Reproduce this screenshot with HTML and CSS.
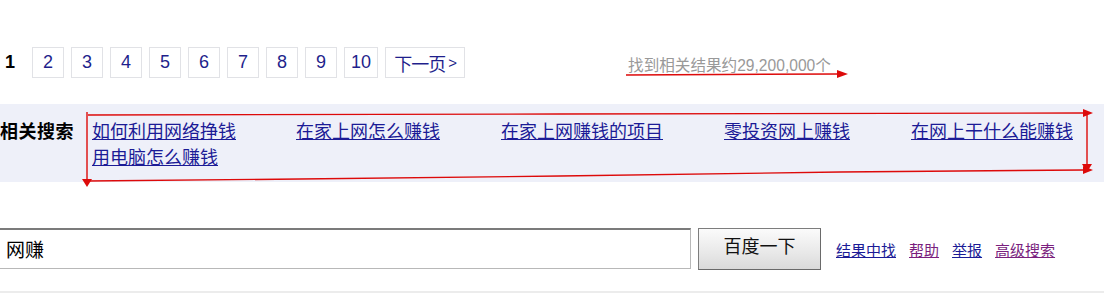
FILE: index.html
```html
<!DOCTYPE html>
<html lang="zh-CN">
<head>
<meta charset="utf-8">
<title>网赚 - 搜索结果</title>
<link rel="stylesheet" href="styles.css">
</head>
<body>
<div class="page">
  <div class="pager">
    <strong class="cur">1</strong>
    <a class="pg" href="#">2</a>
    <a class="pg" href="#">3</a>
    <a class="pg" href="#">4</a>
    <a class="pg" href="#">5</a>
    <a class="pg" href="#">6</a>
    <a class="pg" href="#">7</a>
    <a class="pg" href="#">8</a>
    <a class="pg" href="#">9</a>
    <a class="pg" href="#">10</a>
    <a class="pg next" href="#">下一页<span class="chev">&gt;</span></a>
    <span class="stats">找到相关结果约29,200,000个</span>
  </div>

  <div class="related">
    <div class="rel-label">相关搜索</div>
    <div class="rel-grid">
      <a href="#">如何利用网络挣钱</a>
      <a href="#">在家上网怎么赚钱</a>
      <a href="#">在家上网赚钱的项目</a>
      <a href="#">零投资网上赚钱</a>
      <a href="#">在网上干什么能赚钱</a>
      <a href="#">用电脑怎么赚钱</a>
    </div>
  </div>

  <form class="search">
    <div class="input">网赚</div>
    <button class="btn" type="button">百度一下</button>
    <div class="tools">
      <a href="#">结果中找</a>
      <a class="visited" href="#">帮助</a>
      <a href="#">举报</a>
      <a class="visited" href="#">高级搜索</a>
    </div>
  </form>

  <div class="footline"></div>

  <svg class="marks" width="1104" height="293" viewBox="0 0 1104 293">
    <g stroke="#dd0a0a" stroke-width="1.4" fill="none">
      <path d="M626 75 L720 74.5 L838 74"/>
      <path d="M88 115 L560 114 L1084 113"/>
      <path d="M87 112 L87 180"/>
      <path d="M1087 114 L1087 166"/>
      <path d="M88 181 L300 179 L560 176 L840 172 L1083 170"/>
    </g>
    <g fill="#dd0a0a">
      <polygon points="837,70 848,74 837,78"/>
      <polygon points="1083,109 1093,113 1083,117"/>
      <polygon points="82,179 92,179 87,187"/>
      <polygon points="1082,164 1092,164 1087,172"/>
      <polygon points="1083,166 1093,170 1083,174"/>
    </g>
  </svg>
</div>
</body>
</html>
```

FILE: styles.css
```css
html, body {
  margin: 0;
  padding: 0;
  background: #fff;
}

body {
  font-family: "Liberation Sans", Arial, "Noto Sans CJK SC", sans-serif;
  width: 1104px;
  height: 293px;
  overflow: hidden;
}

.page {
  position: relative;
  width: 1104px;
  height: 293px;
}

a {
  color: #1b1b96;
}

.pager {
  display: flex;
  align-items: center;
  gap: 7px;
  padding-top: 47px;
  height: 31px;
}

.cur {
  font-size: 18px;
  font-weight: bold;
  color: #000;
  padding-left: 5px;
  width: 8px;
  margin-right: 12px;
}

.pg {
  box-sizing: border-box;
  height: 31px;
  min-width: 32px;
  padding: 0 6px;
  border: 1px solid #e1e2e6;
  display: flex;
  align-items: center;
  justify-content: center;
  font-size: 18px;
  color: #1f1f8c;
  text-decoration: none;
  font-family: "Liberation Sans", Arial, "Noto Sans CJK SC", sans-serif;
}

.next {
  width: 80px;
  letter-spacing: -1px;
}

.chev {
  font-size: 15px;
  margin-left: 3px;
  font-weight: 300;
}

.stats {
  margin-left: 156px;
  font-size: 15.6px;
  color: #999;
  margin-top: 2px;
  font-family: "Liberation Sans", Arial, "Noto Sans CJK SC", sans-serif;
}

.related {
  margin-top: 26px;
  height: 78px;
  background: #eef0f9;
  display: flex;
  box-sizing: border-box;
  padding-top: 13px;
  font-family: "Noto Sans CJK SC", sans-serif;
  font-size: 18px;
  line-height: 26px;
}

.rel-label {
  width: 92px;
  font-weight: bold;
  color: #000;
  letter-spacing: 0.5px;
  height: 26px;
}

.rel-grid {
  display: grid;
  grid-template-columns: 204px 205px 223px 187px auto;
  grid-auto-rows: 26px;
}

.rel-grid a {
  display: block;
  height: 26px;
  color: #1b1b96;
  text-decoration: underline;
  white-space: nowrap;
}

.search {
  display: flex;
  align-items: flex-start;
  margin-top: 46px;
  height: 41px;
}

.input {
  box-sizing: border-box;
  width: 691px;
  height: 41px;
  border-top: 2px solid #7b7b7b;
  border-right: 1px solid #b8b8b8;
  border-bottom: 1px solid #b8b8b8;
  padding-left: 6px;
  font-family: "Noto Sans CJK SC", sans-serif;
  font-size: 19px;
  line-height: 37px;
  color: #000;
}

.btn {
  box-sizing: border-box;
  margin-left: 7px;
  width: 123px;
  height: 42px;
  border: 1px solid #7d7d7d;
  border-right-color: #6a6a6a;
  border-bottom-color: #6a6a6a;
  background: linear-gradient(#fbfbfb, #e8e8e8 60%, #dadada);
  font-family: "Noto Sans CJK SC", sans-serif;
  font-size: 18px;
  color: #111;
  padding: 0 0 8px 0;
}

.tools {
  display: flex;
  gap: 13px;
  margin-left: 15px;
  padding-top: 11px;
  font-family: "Noto Sans CJK SC", sans-serif;
  font-size: 15px;
}

.tools a {
  color: #1b1b96;
  text-decoration: underline;
}

.tools a.visited {
  color: #7a1f7e;
}

.footline {
  position: absolute;
  left: 0;
  right: 0;
  bottom: 0;
  height: 2px;
  background: #ececec;
}

.marks {
  position: absolute;
  left: 0;
  top: 0;
  pointer-events: none;
}
```
